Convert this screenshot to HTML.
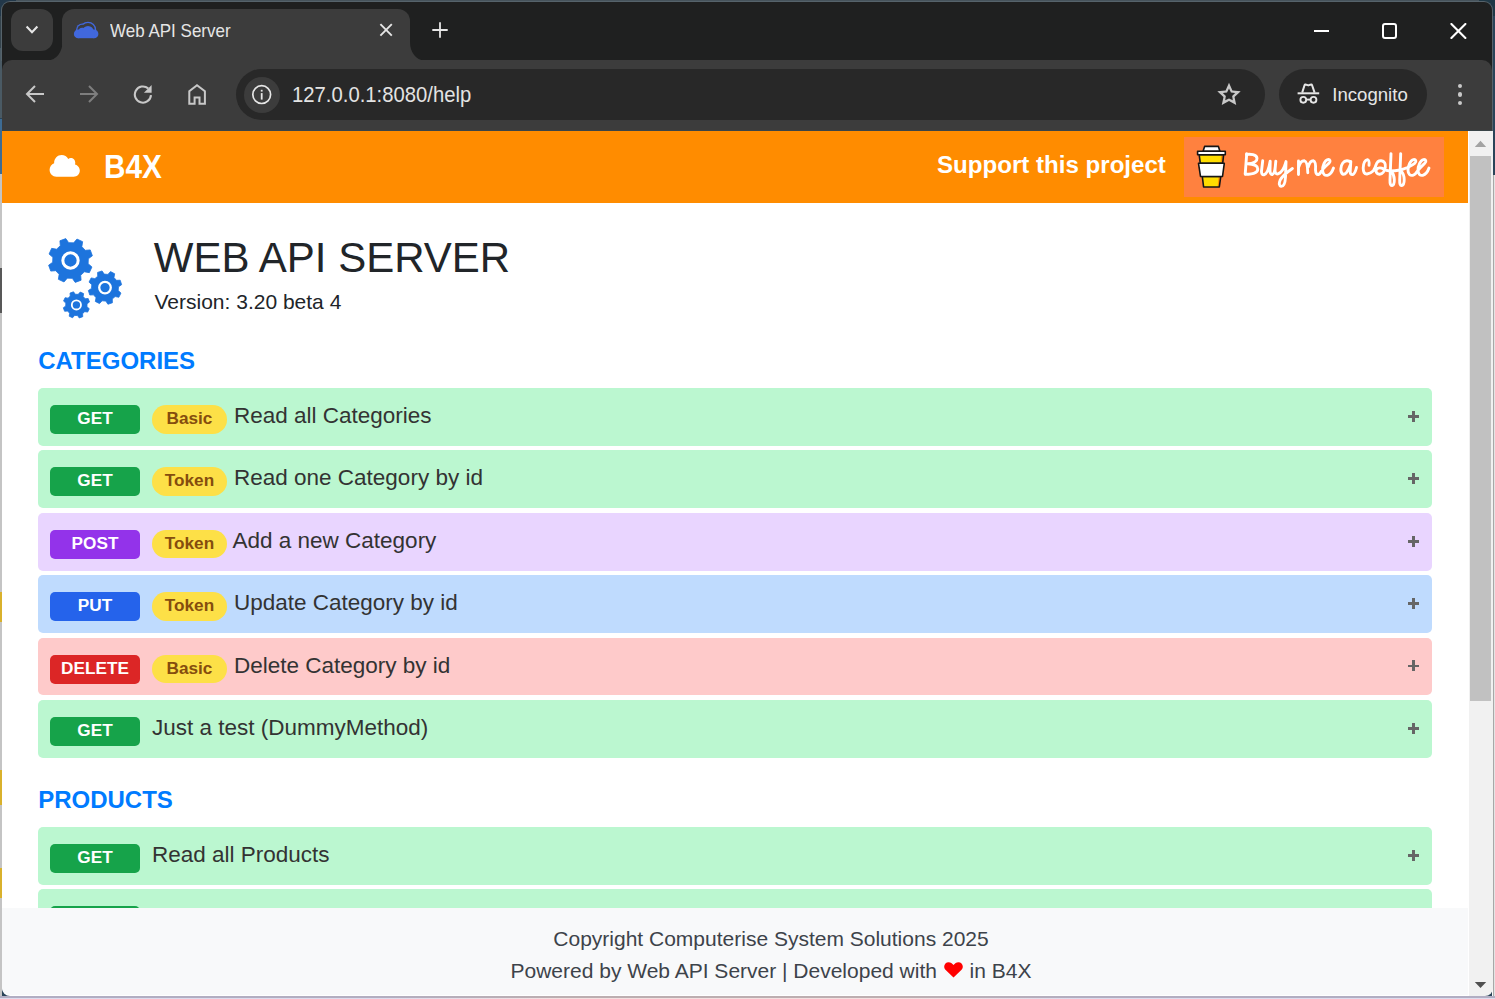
<!DOCTYPE html>
<html><head><meta charset="utf-8">
<style>
*{box-sizing:border-box;margin:0;padding:0}
html,body{width:1495px;height:999px;overflow:hidden}
body{position:relative;background:#2a4459;font-family:"Liberation Sans",sans-serif}
.a{position:absolute}
#deskTop{left:0;top:0;width:1495px;height:2px;background:#46535b}
#deskBot{left:0;top:996px;width:1495px;height:3px;background:linear-gradient(90deg,#b1aec3 0,#b3aec0 380px,#bcaeb0 560px,#bdaeb0 900px,#b3aec0 1080px,#b1aec3 1495px)}
#deskBot2{left:0;top:998px;width:1495px;height:1px;background:linear-gradient(90deg,#dedcee 0,#dedcee 380px,#f4e0e0 560px,#f4e0e0 900px,#dedcee 1080px,#dedcee 1495px)}
#deskR{left:1493px;top:0;width:2px;height:175px;background:#2a4459}
#deskR2{left:1493px;top:175px;width:2px;height:824px;background:#e4e4e4;border-left:1px solid #a8a8a8}
#titlebar{left:1px;top:1px;width:1492px;height:60px;background:#1f2020;border-radius:9px 9px 0 0;border:1px solid #56636b;border-bottom:0}
#toolbar{left:2px;top:60px;width:1490px;height:70px;background:#3c3c3c;border-radius:10px 10px 0 0}
#tsep{left:2px;top:130px;width:1490px;height:1px;background:#3a4448}
#sb{left:1468px;top:131px;width:25px;height:865px;background:#f1f1f1;border-left:1px solid #fff;border-radius:0 0 8px 0}

#page{left:2px;top:131px;width:1466px;height:865px;background:#fff;border-radius:0 0 0 8px}
#hdr{left:2px;top:131px;width:1466px;height:72px;background:#ff8c00}
.t1{position:absolute;line-height:1;white-space:nowrap}
.row{position:absolute;left:38px;width:1394px;height:57.8px;border-radius:5px}
.badge{position:absolute;left:12px;top:17px;width:90px;height:29px;border-radius:5px;color:#fff;font-weight:bold;font-size:17.2px;line-height:27.6px;text-align:center}
.pill{position:absolute;left:114px;top:17px;width:75px;height:28.5px;border-radius:14.25px;background:#fde047;color:#854d0e;font-weight:bold;font-size:17.2px;line-height:27px;text-align:center}
.rt{position:absolute;top:16.95px;font-size:22.5px;line-height:1;color:#333;white-space:nowrap}
.plh{position:absolute;left:1370px;top:27px;width:11px;height:2.8px;background:#666}
.plv{position:absolute;left:1374.1px;top:22.9px;width:2.8px;height:11px;background:#666}
#footer{left:2px;top:908px;width:1466px;height:87px;background:#f8f9fa;border-radius:0 0 0 8px}
.ft{position:absolute;left:36px;width:100%;font-size:21px;line-height:1;color:#3d434a;text-align:center;white-space:nowrap}
.ui{font-family:"Liberation Sans",sans-serif;color:#e3e3e3}
</style></head>
<body>
<div class="a" style="left:0;top:174px;width:2px;height:825px;background:#c4c4c4"></div>
<div class="a" style="left:0;top:0;width:2px;height:48px;background:#34434c"></div>
<div class="a" style="left:0;top:48px;width:2px;height:70px;background:#4a5a64"></div>
<div class="a" style="left:0;top:119px;width:2px;height:55px;background:#3d6b93"></div>
<div class="a" style="left:0;top:268px;width:2px;height:45px;background:#585858"></div>
<div class="a" style="left:0;top:592px;width:2px;height:30px;background:#d9b12c"></div>
<div class="a" style="left:0;top:770px;width:2px;height:35px;background:#d9b12c"></div>
<div class="a" style="left:0;top:868px;width:2px;height:30px;background:#d9b12c"></div>
<div class="a" id="deskTop"></div><div class="a" style="left:1492px;top:55px;width:1px;height:76px;background:#56636b"></div><div class="a" style="left:1492px;top:131px;width:1px;height:866px;background:#fafafa"></div>
<div class="a" id="deskR"></div><div class="a" id="deskR2"></div>
<div class="a" id="deskBot"></div>
<div class="a" id="deskBot2"></div>
<div class="a" style="left:0;top:0;width:16px;height:16px;background:#22384a"></div><div class="a" style="left:1479px;top:0;width:16px;height:16px;background:#1f3846"></div><div class="a" id="titlebar"></div><div class="a" style="left:2px;top:55px;width:1490px;height:20px;background:#1f2020"></div>
<!-- tab dropdown -->
<div class="a" style="left:11px;top:9px;width:42px;height:42px;border-radius:12px;background:#3c3c3c"></div>
<svg class="a" style="left:24px;top:22px" width="16" height="16" viewBox="0 0 16 16"><path d="M2.6 4.6 L8 10.2 L13.4 4.6" fill="none" stroke="#e6e6e6" stroke-width="2.1" stroke-linecap="butt"/></svg>
<!-- active tab -->
<div class="a" style="left:62px;top:9px;width:348px;height:52px;background:#3c3c3c;border-radius:12px 12px 0 0"></div>
<svg class="a" style="left:48px;top:42px" width="14.5" height="18.5" viewBox="0 0 14.5 18.5"><path d="M0 18.5 A14.5 18.5 0 0 0 14.5 0 V18.5 Z" fill="#3c3c3c"/></svg>
<svg class="a" style="left:409.5px;top:42px" width="14" height="18.5" viewBox="0 0 14 18.5"><path d="M14 18.5 A14 18.5 0 0 1 0 0 V18.5 Z" fill="#3c3c3c"/></svg>
<svg class="a" style="left:70px;top:18px" width="32" height="24" viewBox="70 18 32 24">
<g fill="#4168dd"><circle cx="82.3" cy="29.6" r="6.2"/><circle cx="88" cy="29.9" r="8.2"/></g>
<g fill="#3c3c3c"><circle cx="82.3" cy="29.6" r="4.9"/><circle cx="88" cy="29.9" r="6.9"/></g>
<g fill="#4168dd"><circle cx="78.2" cy="33.9" r="4.3"/><circle cx="82.3" cy="31.6" r="3.9"/><circle cx="88" cy="31.6" r="5.7"/><circle cx="94.1" cy="33.9" r="4.3"/><rect x="78.2" y="31" width="15.9" height="7.2"/></g>
</svg>
<div class="a ui" style="left:110px;top:21.6px;font-size:17px;line-height:20px;color:#e6e6e6;transform:scaleY(1.13);transform-origin:0 15.9px">Web API Server</div>
<svg class="a" style="left:378px;top:22px" width="16" height="16" viewBox="0 0 16 16"><path d="M2.4 2.2 L13.8 13.6 M13.8 2.2 L2.4 13.6" stroke="#e6e6e6" stroke-width="1.9"/></svg>
<svg class="a" style="left:430px;top:20px" width="20" height="20" viewBox="0 0 20 20"><path d="M10 2.3 V17.8 M2.3 10 H17.7" stroke="#e6e6e6" stroke-width="1.8"/></svg>
<!-- window controls -->
<div class="a" style="left:1314px;top:30px;width:15.2px;height:2.2px;background:#fff"></div>
<div class="a" style="left:1382px;top:23.2px;width:15px;height:15.5px;border:2px solid #fff;border-radius:3px"></div>
<svg class="a" style="left:1450px;top:23px" width="17" height="16" viewBox="0 0 17 16"><path d="M1.4 1 L15.4 15 M15.4 1 L1.4 15" stroke="#fff" stroke-width="2.1" stroke-linecap="round"/></svg>

<div class="a" id="toolbar"></div>
<div class="a" id="tsep"></div>
<!-- nav icons -->
<svg class="a" style="left:25px;top:84px" width="20" height="20" viewBox="0 0 20 20"><path d="M19 10 H2.5 M10 2 L2 10 L10 18" fill="none" stroke="#c8c8c8" stroke-width="2"/></svg>
<svg class="a" style="left:79px;top:84px" width="20" height="20" viewBox="0 0 20 20"><path d="M1 10 H17.5 M10 2 L18 10 L10 18" fill="none" stroke="#7e7e7e" stroke-width="2"/></svg>
<svg class="a" style="left:133px;top:84px" width="21" height="22" viewBox="133 84 21 22"><path d="M151 95.2 A8.1 8.1 0 1 1 148.2 88.4" fill="none" stroke="#c8c8c8" stroke-width="2.1"/><path d="M151.6 85 L151.6 92.8 L143.9 92.8 Z" fill="#c8c8c8"/></svg>
<svg class="a" style="left:187px;top:83px" width="20" height="23" viewBox="187 83 20 23"><path d="M189.3 103.8 V91.2 L197 85.2 L204.9 91.2 V103.8 H199.5 V97.4 H194.6 V103.8 Z" fill="none" stroke="#c8c8c8" stroke-width="2"/></svg>
<!-- omnibox -->
<div class="a" style="left:236px;top:69px;width:1029px;height:51px;border-radius:26px;background:#282828"></div>
<div class="a" style="left:244px;top:77px;width:36px;height:36px;border-radius:18px;background:#3c3c3c"></div>
<svg class="a" style="left:251px;top:84px" width="21" height="21" viewBox="251 84 21 21"><circle cx="261.7" cy="94.6" r="8.9" fill="none" stroke="#e6e6e6" stroke-width="1.7"/><rect x="260.8" y="93.1" width="1.8" height="6.5" fill="#e6e6e6"/><rect x="260.8" y="89.8" width="1.8" height="1.8" fill="#e6e6e6"/></svg>
<div class="a ui" style="left:292px;top:83px;font-size:20.3px;line-height:23px;color:#e3e3e3;transform:scaleY(1.07);transform-origin:0 0">127.0.0.1:8080/help</div>
<svg class="a" style="left:1215px;top:81px" width="28" height="26" viewBox="1215 81 28 26"><path d="M1229.00 82.80 L1232.41 90.41 L1240.70 91.30 L1234.52 96.89 L1236.23 105.05 L1229.00 100.90 L1221.77 105.05 L1223.48 96.89 L1217.30 91.30 L1225.59 90.41 Z M1229.00 88.60 L1230.94 92.43 L1235.18 93.09 L1232.14 96.12 L1232.82 100.36 L1229.00 98.40 L1225.18 100.36 L1225.86 96.12 L1222.82 93.09 L1227.06 92.43 Z" fill="#c8c8c8" fill-rule="evenodd"/></svg>
<!-- incognito pill -->
<div class="a" style="left:1279px;top:69px;width:148px;height:51px;border-radius:26px;background:#282828"></div>
<svg class="a" style="left:1297px;top:82px" width="24" height="23" viewBox="0 0 24 23"><path d="M5.2 10.6 L7.6 3 Q7.9 2.2 8.7 2.5 L11.3 3.4 L13.9 2.5 Q14.7 2.2 15 3 L17.6 10.6" fill="none" stroke="#e6e6e6" stroke-width="2" stroke-linejoin="round"/><rect x="0.6" y="10.3" width="21.6" height="2" fill="#e6e6e6"/><circle cx="6.3" cy="17.8" r="2.9" fill="none" stroke="#e6e6e6" stroke-width="1.9"/><circle cx="16.5" cy="17.8" r="2.9" fill="none" stroke="#e6e6e6" stroke-width="1.9"/><path d="M9.2 17.6 H13.6" stroke="#e6e6e6" stroke-width="1.9"/></svg>
<div class="a ui" style="left:1332.3px;top:83.6px;font-size:18.6px;line-height:22px;color:#e6e6e6">Incognito</div>
<div class="a" style="left:1457.5px;top:83.5px;width:4.6px;height:4.6px;border-radius:2.3px;background:#c8c8c8"></div>
<div class="a" style="left:1457.5px;top:92px;width:4.6px;height:4.6px;border-radius:2.3px;background:#c8c8c8"></div>
<div class="a" style="left:1457.5px;top:100.5px;width:4.6px;height:4.6px;border-radius:2.3px;background:#c8c8c8"></div>

<div class="a" id="page"></div>
<div class="a" id="hdr"></div>
<svg class="a" style="left:49px;top:154px" width="32" height="24" viewBox="49 154 32 24"><path transform="translate(49.6 153.45) scale(0.0472 0.0485)" d="M537.6 226.6c4.1-10.7 6.4-22.4 6.4-34.6 0-53-43-96-96-96-19.7 0-38.1 6-53.3 16.2C367 64.2 315.3 32 256 32c-88.4 0-160 71.6-160 160 0 2.7.1 5.4.2 8.1C40.2 219.8 0 273.2 0 336c0 79.5 64.5 144 144 144h368c70.7 0 128-57.3 128-128 0-61.9-44-113.6-102.4-125.4z" fill="#fff"/></svg>
<div class="t1" style="left:103.6px;top:152.5px;font-size:30px;font-weight:bold;color:#fff;transform:scale(0.99,1.1);transform-origin:0 25.4px">B4X</div>
<div class="t1" style="left:937px;top:152.7px;font-size:24.1px;font-weight:bold;color:#fff">Support this project</div>
<div class="a" style="left:1184px;top:137px;width:259.5px;height:59.7px;background:#ff813f"></div>
<svg class="a" style="left:1184px;top:137px" width="260" height="60" viewBox="1184 137 260 60">
<g><path d="M1203 151.4 L1204.6 146.4 L1218.4 146.4 L1220 151.4 Z" fill="#fff"/><path d="M1202.3 176.5 L1220.8 176.5 L1219.3 187 L1203.6 187 Z" fill="#ffdd00"/><path d="M1199.2 154.8 L1223.6 154.8 L1222.7 163.3 L1200.3 163.3 Z" fill="#ffdd00"/><path d="M1221.2 154.8 L1223.6 154.8 L1222.7 163.3 L1220.6 163.3 Z" fill="#ff9100"/><path d="M1218.6 176.5 L1220.8 176.5 L1219.3 187 L1217.6 187 Z" fill="#ff9100"/></g><g stroke="#161616" stroke-width="1.6" stroke-linejoin="round"><path d="M1203 151.4 L1204.6 146.4 L1218.4 146.4 L1220 151.4 Z" fill="none"/><path d="M1202.3 176.5 L1220.8 176.5 L1219.3 187 L1203.6 187 Z" fill="none"/><path d="M1199.2 154.8 L1223.6 154.8 L1222.7 163.3 L1200.3 163.3 Z" fill="none"/><path d="M1197.6 151.2 H1225.3 V154.8 H1197.6 Z" fill="#fff"/><path d="M1198.5 163.3 L1224.3 163.3 L1222.5 176.5 L1200.5 176.5 Z" fill="#fff"/></g>
<g fill="none" stroke="#fff" stroke-width="2.9" stroke-linecap="round" stroke-linejoin="round">
<path d="M1246.7 153.8 C1246.3 160 1245.6 168 1245.2 174.2"/>
<path d="M1246.5 154.5 C1250 153.8 1256.8 154.5 1257 158.3 C1257.2 161.5 1252 163.3 1247.6 163.8 C1252 164 1257.8 165 1257.8 169 C1257.8 173.5 1251 174.8 1245.3 174"/>
<path d="M1262.7 160.8 L1261.5 171 Q1261.3 175 1264 174.8 Q1268 174 1270.2 161.1 L1270 170 Q1270 175 1272.5 174.5 Q1275 173.5 1275.8 161.1 L1275 170 Q1275 174.5 1278 173.9 Q1283 172.5 1286 161.6 L1285.5 177 Q1285 186.5 1281.2 186.4 Q1278 185.5 1280.2 180 Q1283 175 1292.4 168.5"/>
<path d="M1298.5 161 L1298.5 174.5 M1298.8 167 Q1300.5 160.5 1304.5 160.8 Q1307.5 161.5 1307.8 172.8 M1308.2 167 Q1310 160.5 1313.5 160.8 Q1316 161.5 1315.5 170 Q1315.8 175 1318.5 174.5 Q1320 174 1321.5 171 C1323.5 168 1327 165 1329 163.2 C1331 161.3 1330 159.3 1327.8 159.6 C1324.5 160.3 1322.6 166 1322.6 170.3 C1322.6 174.3 1325 175.8 1327.5 175.3 C1330 174.7 1332.3 171.5 1333.5 168"/>
<path d="M1350.5 162.5 C1349 160.3 1345 160 1342.8 163 C1340.5 166 1340 172 1342.5 174 C1345 175.5 1348.5 171 1350.3 165 M1350.8 161.5 L1350.2 171.5 Q1350.2 175 1352.7 174.6 Q1355 173.8 1356.5 167.5"/>
<path d="M1369 165.3 Q1369.5 160 1367.5 159.6 Q1363.5 160.5 1363.2 168 Q1363.2 174.3 1367 174 Q1370.5 173.5 1373.4 170.7 Q1375 168.5 1376 165 C1377 162 1379 160.5 1381.3 160.8 C1384.3 161.2 1385.8 163.5 1385.3 167 C1384.8 171 1382.5 174.3 1379.5 174.2 C1376.5 174 1375.3 171.5 1376.5 169.5 C1378 167.5 1381 167.5 1383.5 169 Q1386 170.8 1390 171 Q1395 171 1400 170 Q1404 169 1407.5 167.5 C1409.5 166.5 1413 165 1414.8 163.2 C1416.8 161.3 1415.8 159.3 1413.5 159.6 C1410.2 160.3 1408 166 1408 170.3 C1408 174.3 1410.4 175.8 1412.7 175.3 C1415 174.7 1416.5 172.8 1417.5 171 C1419.5 168 1423 165 1424.8 163.2 C1426.8 161.3 1425.8 159.3 1423.5 159.6 C1420.2 160.3 1418 166 1418 170.3 C1418 174.3 1420.4 175.8 1422.7 175.3 C1425.5 174.5 1427.8 171.5 1429 168"/>
<path d="M1391 153.6 Q1390.5 168 1390 180 Q1389.8 185.8 1392 185.6 Q1394.5 185 1394.3 179.5 Q1394 174 1391.5 171.5"/>
<path d="M1400.7 153.6 Q1400.2 168 1399.7 180 Q1399.5 185.8 1401.7 185.6 Q1404.3 185 1404.2 179.5 Q1404 174 1401.5 171.5"/>
</g></svg>
<svg class="a" style="left:40px;top:230px" width="100" height="95" viewBox="40 230 100 95"><path d="M73.70 242.87 L76.97 239.06 L82.63 241.67 L81.85 246.63 L85.23 250.30 L90.24 249.91 L92.39 255.77 L88.33 258.72 L88.13 263.70 L91.94 266.97 L89.33 272.63 L84.37 271.85 L80.70 275.23 L81.09 280.24 L75.23 282.39 L72.28 278.33 L67.30 278.13 L64.03 281.94 L58.37 279.33 L59.15 274.37 L55.77 270.70 L50.76 271.09 L48.61 265.23 L52.67 262.28 L52.87 257.30 L49.06 254.03 L51.67 248.37 L56.63 249.15 L60.30 245.77 L59.91 240.76 L65.77 238.61 L68.72 242.67 Z" fill="#1d74dd" stroke="#1d74dd" stroke-width="0.8" stroke-linejoin="round"/><circle cx="70.5" cy="260.5" r="7.67" fill="none" stroke="#fff" stroke-width="3.02"/><path d="M107.93 274.40 L110.50 271.62 L114.69 273.76 L113.96 277.47 L116.40 280.34 L120.19 280.19 L121.64 284.67 L118.49 286.77 L118.20 290.53 L120.98 293.10 L118.84 297.29 L115.13 296.56 L112.26 299.00 L112.41 302.79 L107.93 304.24 L105.83 301.09 L102.07 300.80 L99.50 303.58 L95.31 301.44 L96.04 297.73 L93.60 294.86 L89.81 295.01 L88.36 290.53 L91.51 288.43 L91.80 284.67 L89.02 282.10 L91.16 277.91 L94.87 278.64 L97.74 276.20 L97.59 272.41 L102.07 270.96 L104.17 274.11 Z" fill="#1d74dd" stroke="#1d74dd" stroke-width="0.8" stroke-linejoin="round"/><circle cx="105" cy="287.6" r="5.79" fill="none" stroke="#fff" stroke-width="2.28"/><path d="M78.26 294.34 L80.21 292.05 L83.60 293.60 L83.15 296.57 L85.18 298.75 L88.18 298.51 L89.48 302.00 L87.06 303.78 L86.96 306.76 L89.25 308.71 L87.70 312.10 L84.73 311.65 L82.55 313.68 L82.79 316.68 L79.30 317.98 L77.52 315.56 L74.54 315.46 L72.59 317.75 L69.20 316.20 L69.65 313.23 L67.62 311.05 L64.62 311.29 L63.32 307.80 L65.74 306.02 L65.84 303.04 L63.55 301.09 L65.10 297.70 L68.07 298.15 L70.25 296.12 L70.01 293.12 L73.50 291.82 L75.28 294.24 Z" fill="#1d74dd" stroke="#1d74dd" stroke-width="0.8" stroke-linejoin="round"/><circle cx="76.4" cy="304.9" r="4.59" fill="none" stroke="#fff" stroke-width="1.81"/></svg>
<div class="t1" style="left:153.8px;top:236.6px;font-size:42px;color:#212529">WEB API SERVER</div>
<div class="t1" style="left:154.5px;top:291px;font-size:21px;color:#212529">Version: 3.20 beta 4</div>
<div class="t1" style="left:38.2px;top:348.6px;font-size:24px;font-weight:bold;color:#007bff">CATEGORIES</div>
<div class="t1" style="left:38.2px;top:787.6px;font-size:24px;font-weight:bold;color:#007bff">PRODUCTS</div>
<div class="row" style="top:388.0px;background:#bbf7d0"><div class="badge" style="background:#16a34a">GET</div><div class="pill">Basic</div><div class="rt" style="left:196px">Read all Categories</div><div class="plh"></div><div class="plv"></div></div>
<div class="row" style="top:450.4px;background:#bbf7d0"><div class="badge" style="background:#16a34a">GET</div><div class="pill">Token</div><div class="rt" style="left:196px">Read one Category by id</div><div class="plh"></div><div class="plv"></div></div>
<div class="row" style="top:512.8px;background:#e9d5ff"><div class="badge" style="background:#9333ea">POST</div><div class="pill">Token</div><div class="rt" style="left:194.5px">Add a new Category</div><div class="plh"></div><div class="plv"></div></div>
<div class="row" style="top:575.2px;background:#bfdbfe"><div class="badge" style="background:#2563eb">PUT</div><div class="pill">Token</div><div class="rt" style="left:196px">Update Category by id</div><div class="plh"></div><div class="plv"></div></div>
<div class="row" style="top:637.6px;background:#fecaca"><div class="badge" style="background:#dc2626">DELETE</div><div class="pill">Basic</div><div class="rt" style="left:196px">Delete Category by id</div><div class="plh"></div><div class="plv"></div></div>
<div class="row" style="top:700.0px;background:#bbf7d0"><div class="badge" style="background:#16a34a">GET</div><div class="rt" style="left:114px">Just a test (DummyMethod)</div><div class="plh"></div><div class="plv"></div></div>
<div class="row" style="top:827.0px;background:#bbf7d0"><div class="badge" style="background:#16a34a">GET</div><div class="rt" style="left:114px">Read all Products</div><div class="plh"></div><div class="plv"></div></div>
<div class="row" style="top:889.0px;background:#bbf7d0"><div class="badge" style="background:#16a34a">GET</div><div class="rt" style="left:114px"></div><div class="plh"></div><div class="plv"></div></div>
<div class="a" id="footer">
 <div class="ft" style="top:19.9px">Copyright Computerise System Solutions 2025</div>
 <div class="ft" style="top:52px">Powered by Web API Server | Developed with <svg style="display:inline-block;vertical-align:baseline;margin:0 1px 0 1px" width="19" height="16" viewBox="0 0 19 16"><path d="M9.5 15.6 L2.2 8.6 C0.6 7 0.2 5.9 0.2 4.6 C0.2 2.1 2.1 0.2 4.6 0.2 C6.6 0.2 8.2 1.3 9.5 3.1 C10.8 1.3 12.4 0.2 14.4 0.2 C16.9 0.2 18.8 2.1 18.8 4.6 C18.8 5.9 18.4 7 16.8 8.6 Z" fill="#f00"/></svg> in B4X</div>
</div>
<div class="a" id="sb"></div>
<div class="a" style="left:1470px;top:156px;width:21px;height:544.7px;background:#c1c1c1"></div>
<svg class="a" style="left:1474px;top:140px" width="13" height="8" viewBox="0 0 13 8"><path d="M0.8 7 L6.5 0.8 L12.2 7 Z" fill="#a3a3a3"/></svg>
<svg class="a" style="left:1474px;top:981px" width="13" height="8" viewBox="0 0 13 8"><path d="M0.8 0.9 L6.5 7 L12.2 0.9 Z" fill="#505050"/></svg>
</body></html>
